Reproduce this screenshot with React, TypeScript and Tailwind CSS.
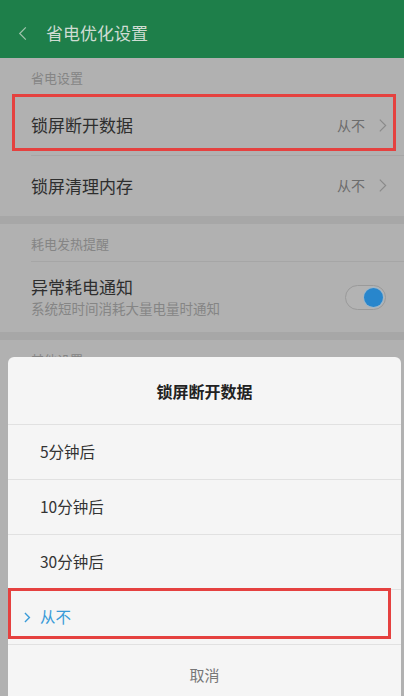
const font = { fontFamily: '"Noto Sans CJK SC", "Noto Sans", sans-serif' };

function Chevron({ className, width = 1.3 }: { className?: string; width?: number }) {
  return (
    <svg viewBox="0 0 10 16" className={className} fill="none" stroke="currentColor" strokeWidth={width}>
      <path d="M2 1.5 L8.5 8 L2 14.5" />
    </svg>
  );
}

function SettingRow({ label, value, tall }: { label: string; value: string; tall?: boolean }) {
  return (
    <div className={`flex items-center justify-between pl-[31px] pr-[17px] ${tall ? "h-[60px]" : "h-[59px]"}`}>
      <span className="text-[17px] text-[#2e2e2e]">{label}</span>
      <div className="flex items-center gap-[13px]">
        <span className="text-[14px] text-[#6c6c6c]">{value}</span>
        <Chevron className="h-[15px] w-[9px] text-[#8a8a8a]" />
      </div>
    </div>
  );
}

const options = ["5分钟后", "10分钟后", "30分钟后"];

export default function App() {
  return (
    <div className="relative h-[696px] w-[404px] overflow-hidden bg-[#b1b1b1]" style={font}>
      {/* Header */}
      <header className="flex h-[58px] items-center bg-[#1e7f4a] pt-[8px]">
        <Chevron className="ml-[18px] h-[15px] w-[10px] rotate-180 text-[#9fc3ac]" />
        <h1 className="ml-[18px] text-[17px] text-[#cfdcd3]">省电优化设置</h1>
      </header>

      {/* 省电设置 */}
      <section>
        <p className="pl-[31px] pt-[10px] pb-[8px] text-[13px] text-[#858585]">省电设置</p>
        <SettingRow label="锁屏断开数据" value="从不" />
        <div className="ml-[31px] h-px bg-[#a6a6a6]" />
        <SettingRow label="锁屏清理内存" value="从不" tall />
      </section>

      <div className="h-[8px] bg-[#a7a7a7]" />

      {/* 耗电发热提醒 */}
      <section>
        <p className="pl-[31px] pt-[10px] pb-[8px] text-[13px] text-[#858585]">耗电发热提醒</p>
        <div className="ml-[31px] h-px bg-[#a6a6a6]" />
        <div className="flex h-[70px] items-center justify-between pl-[31px] pr-[18px]">
          <div className="flex flex-col">
            <span className="text-[17px] leading-[22px] text-[#2e2e2e]">异常耗电通知</span>
            <span className="text-[13.5px] leading-[20px] text-[#858585]">系统短时间消耗大量电量时通知</span>
          </div>
          <div className="relative h-[25px] w-[41px] rounded-full border border-[#9a9a9a] bg-[#b3b3b3]">
            <div className="absolute right-[2px] top-[2px] h-[19px] w-[19px] rounded-full bg-[#2886cc] ring-1 ring-[#9cb6c9]" />
          </div>
        </div>
      </section>

      <div className="h-[8px] bg-[#a7a7a7]" />
      <p className="pl-[31px] pt-[10px] text-[13px] text-[#858585]">其他设置</p>

      {/* Highlight on first row */}
      <div className="absolute left-[12px] top-[94px] h-[57px] w-[384px] border-[3px] border-[#e5413f]" />

      {/* Bottom sheet */}
      <div className="absolute left-[8px] top-[357px] w-[393px] rounded-t-[6px] bg-[#f5f5f5]">
        <div className="flex h-[67px] items-center justify-center">
          <span className="text-[16px] font-bold text-[#222]">锁屏断开数据</span>
        </div>
        {options.map((o) => (
          <div key={o} className="border-t border-[#e1e1e1]">
            <div className="flex h-[54px] items-center pl-[32px] text-[15.5px] text-[#333]">{o}</div>
          </div>
        ))}
        <div className="relative border-t border-[#e1e1e1]">
          <div className="flex h-[54px] items-center pl-[15px] text-[15.5px] text-[#3a9bd8]">
            <Chevron className="mr-[9px] h-[11px] w-[8px] text-[#3a9bd8]" width={2} />
            从不
          </div>
          <div className="absolute left-0 top-[-2px] h-[51px] w-[383px] border-[3px] border-[#e5413f]" />
        </div>
        <div className="border-t border-[#e1e1e1]">
          <div className="flex h-[60px] items-center justify-center text-[15px] text-[#777]">取消</div>
        </div>
      </div>
    </div>
  );
}
